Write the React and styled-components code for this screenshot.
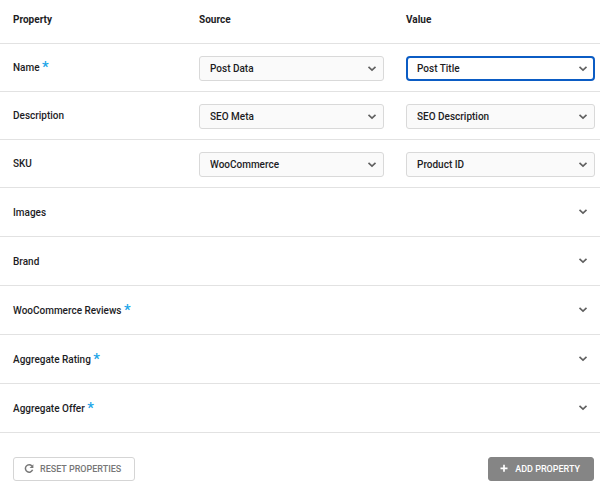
import React from "react";
import styled, { createGlobalStyle, css } from "styled-components";

const GlobalStyle = createGlobalStyle`
  *, *::before, *::after { box-sizing: border-box; }
  body {
    margin: 0;
    background: #fff;
    color: #1d1d1f;
    font: 500 10px/16px Roboto, "Liberation Sans", sans-serif;
  }
`;

const columns = css`
  display: grid;
  grid-template-columns: 164fr 185fr 189fr;
  column-gap: 22px;
  padding-left: 13px;
  padding-right: 5px;
`;

const HeaderRow = styled.div`
  ${columns}
  padding-top: 12px;
  padding-bottom: 15px;
  border-bottom: 1px solid #e2e2e2;
`;

const Heading = styled.span`
  font-weight: 700;
`;

const FieldRow = styled.div`
  ${columns}
  padding-top: 12px;
  padding-bottom: 10px;
  border-bottom: 1px solid #e2e2e2;
`;

const Label = styled.label`
  padding-top: 4px;
`;

const Required = styled.span`
  color: #1ba5e8;
  font-size: 15px;
  line-height: 10px;
  vertical-align: -1px;
`;

const SelectBox = styled.div`
  display: grid;
  align-items: center;
`;

const Select = styled.select`
  grid-area: 1 / 1;
  width: 100%;
  height: 25px;
  padding: 0 24px 0 10px;
  appearance: none;
  border: 1px solid #d9d9d9;
  border-radius: 3px;
  background: #fafafa;
  color: inherit;
  font: inherit;
  outline: none;

  ${({ $active }) =>
    $active &&
    css`
      padding: 0 23px 0 9px;
      border: 2px solid #0b5cc4;
      border-radius: 4px;
      background: #fff;
    `}
`;

const Chevron = styled.svg`
  grid-area: 1 / 1;
  justify-self: end;
  width: 10px;
  height: 8px;
  margin-right: 7px;
  fill: none;
  stroke: #606060;
  stroke-width: 1.6;
  pointer-events: none;
`;

const SectionButton = styled.button`
  display: flex;
  align-items: center;
  justify-content: space-between;
  width: 100%;
  height: 49px;
  padding: 0 5px 0 13px;
  border: 0;
  border-bottom: 1px solid #e2e2e2;
  background: #fff;
  color: inherit;
  font: inherit;
  text-align: left;
`;

const SectionTitle = styled.span`
  padding-top: 2px;
`;

const Footer = styled.footer`
  display: flex;
  justify-content: space-between;
  padding: 24px 6px 9px 13px;
`;

const ActionButton = styled.button`
  display: flex;
  align-items: center;
  gap: 6px;
  height: 24px;
  padding: 0 13px 0 10px;
  border: 1px solid ${({ $filled }) => ($filled ? "#858585" : "#d5d5d5")};
  border-radius: 3px;
  background: ${({ $filled }) => ($filled ? "#858585" : "#fff")};
  color: ${({ $filled }) => ($filled ? "#fff" : "#777")};
  font: inherit;
  font-size: 9px;
`;

const ActionIcon = styled.svg`
  width: 10px;
  height: 10px;
  fill: none;
  stroke: currentColor;
`;

function DownIcon() {
  return (
    <Chevron viewBox="0 0 10 8" aria-hidden="true">
      <path d="M1.5 1.8 5 5.1 8.5 1.8" />
    </Chevron>
  );
}

function Picker({ id, name, value, active }) {
  return (
    <SelectBox>
      <Select id={id} aria-label={name} defaultValue={value} $active={active}>
        <option>{value}</option>
      </Select>
      <DownIcon />
    </SelectBox>
  );
}

const fields = [
  { id: "name", label: "Name", required: true, source: "Post Data", value: "Post Title", active: true },
  { id: "description", label: "Description", source: "SEO Meta", value: "SEO Description" },
  { id: "sku", label: "SKU", source: "WooCommerce", value: "Product ID" },
];

const sections = [
  { label: "Images" },
  { label: "Brand" },
  { label: "WooCommerce Reviews", required: true },
  { label: "Aggregate Rating", required: true },
  { label: "Aggregate Offer", required: true },
];

export default function App() {
  return (
    <main>
      <GlobalStyle />
      <HeaderRow>
        <Heading>Property</Heading>
        <Heading>Source</Heading>
        <Heading>Value</Heading>
      </HeaderRow>
      {fields.map((f) => (
        <FieldRow key={f.id}>
          <Label htmlFor={f.id}>
            {f.label} {f.required && <Required>*</Required>}
          </Label>
          <Picker id={f.id} name={`${f.label} source`} value={f.source} />
          <Picker name={`${f.label} value`} value={f.value} active={f.active} />
        </FieldRow>
      ))}
      {sections.map((s) => (
        <SectionButton key={s.label} type="button" aria-expanded="false">
          <SectionTitle>
            {s.label} {s.required && <Required>*</Required>}
          </SectionTitle>
          <DownIcon />
        </SectionButton>
      ))}
      <Footer>
        <ActionButton type="button">
          <ActionIcon viewBox="0 0 10 10" aria-hidden="true">
            <path d="M7.9 2A3.7 3.7 0 1 0 8.6 5.8" strokeWidth="1.5" />
            <path d="M9.4 0.2V4H5.6Z" fill="currentColor" stroke="none" />
          </ActionIcon>
          RESET PROPERTIES
        </ActionButton>
        <ActionButton type="button" $filled>
          <ActionIcon viewBox="0 0 10 10" aria-hidden="true">
            <path d="M5 0.8V7.8M1.5 4.3H8.5" strokeWidth="1.7" />
          </ActionIcon>
          ADD PROPERTY
        </ActionButton>
      </Footer>
    </main>
  );
}
